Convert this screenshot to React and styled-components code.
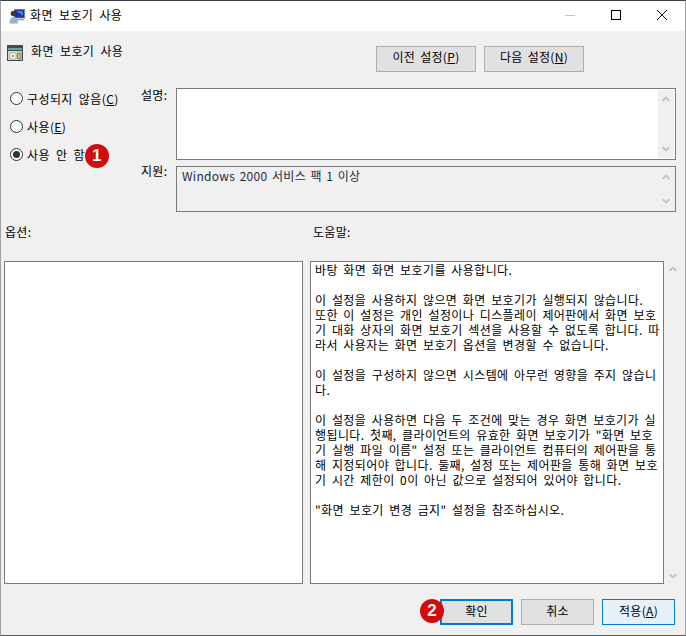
import React from "react";
import styled, { createGlobalStyle } from "styled-components";

const GlobalStyle = createGlobalStyle`
  html, body {
    margin: 0;
    padding: 0;
    background: #f0f0f0;
  }
  body {
    font-family: "Noto Sans CJK KR", "Noto Sans", sans-serif;
    font-size: 12px;
    color: #000;
  }
`;

const Window = styled.div`
  box-sizing: border-box;
  width: 686px;
  height: 636px;
  display: flex;
  flex-direction: column;
  background: #f0f0f0;
  border-top: 1px solid #3a3f45;
  border-bottom: 1px solid #55585c;
  border-left: 1px solid #a0a0a0;
  border-right: 1px solid #a0a0a0;
`;

const TitleBar = styled.div`
  height: 30px;
  flex: none;
  background: #fff;
  display: flex;
  align-items: center;
  padding-left: 8px;
`;

const WindowTitle = styled.span`
  flex: 1;
  margin-left: 5px;
  padding-bottom: 2px;
  line-height: 16px;
  letter-spacing: 0.4px;
  word-spacing: 3px;
`;

const CaptionButton = styled.div`
  width: 46px;
  height: 30px;
  padding-bottom: 2px;
  box-sizing: border-box;
  display: flex;
  align-items: center;
  justify-content: center;
`;

const Header = styled.div`
  display: flex;
  justify-content: space-between;
  height: 26px;
  margin-top: 15px;
  padding: 0 101px 0 6px;
`;

const Heading = styled.div`
  display: flex;
  align-items: flex-start;
  gap: 8px;
  margin-top: -1px;
`;

const HeadingText = styled.span`
  margin-top: -2px;
  line-height: 16px;
  letter-spacing: 0.4px;
  word-spacing: 3px;
`;

const NavButtons = styled.div`
  display: flex;
  gap: 8px;
`;

const Button = styled.button`
  box-sizing: border-box;
  width: ${({ $wide }) => ($wide ? "100px" : "73px")};
  height: 26px;
  padding: 0 0 ${({ $wide }) => ($wide ? "5px" : "3px")};
  font: inherit;
  letter-spacing: 0.3px;
  word-spacing: 2px;
  color: #000;
  background: ${({ $apply }) => ($apply ? "#e5f1fb" : "#e1e1e1")};
  border: ${({ $default }) => ($default ? "2px" : "1px")} solid
    ${({ $default, $apply }) => ($default || $apply ? "#0078d7" : "#adadad")};
`;

const SettingsRow = styled.div`
  display: flex;
  margin-top: 16px;
  padding-left: 9px;
`;

const RadioColumn = styled.div`
  width: 131px;
  padding-top: 1px;
  display: flex;
  flex-direction: column;
  gap: 10px;
`;

const RadioRow = styled.div`
  position: relative;
  height: 18px;
  display: flex;
  align-items: center;
  gap: 4px;
  letter-spacing: 0.4px;
  word-spacing: 3px;
`;

const RadioDot = styled.span`
  box-sizing: border-box;
  width: 13px;
  height: 13px;
  flex: none;
  border-radius: 50%;
  border: 1px solid #333;
  background: #fff;
  display: flex;
  align-items: center;
  justify-content: center;

  &::after {
    content: "";
    display: ${({ $checked }) => ($checked ? "block" : "none")};
    width: 7px;
    height: 7px;
    border-radius: 50%;
    background: #333;
  }
`;

const Badge = styled.span`
  position: absolute;
  left: ${({ $left }) => $left}px;
  top: ${({ $top }) => $top}px;
  width: 24px;
  height: 24px;
  border-radius: 50%;
  background: #d40b0b;
  color: #fff;
  font-family: "Liberation Sans", sans-serif;
  font-weight: 700;
  font-size: 17px;
  line-height: 24px;
  text-align: center;
`;

const Fields = styled.div`
  display: grid;
  grid-template-columns: 35px 500px;
  grid-template-rows: 72px 46px;
  row-gap: 6px;
`;

const FieldLabel = styled.div`
  line-height: 16px;
  margin-top: ${({ $top }) => $top}px;
  letter-spacing: 0.3px;
`;

const FieldBox = styled.div`
  box-sizing: border-box;
  border: 1px solid #7a7a7a;
  background: ${({ $muted }) => ($muted ? "#f0f0f0" : "#fff")};
  display: flex;
  justify-content: space-between;
  padding: 1px;
`;

const SupportText = styled.div`
  padding: 0 4px;
  line-height: 16px;
  color: #1f2a44;
  letter-spacing: 0.3px;
  word-spacing: 1.5px;
`;

const ScrollTrack = styled.div`
  width: ${({ $width }) => $width}px;
  flex: none;
  background: #f0f0f0;
  display: flex;
  flex-direction: column;
  justify-content: space-between;
  align-items: center;
  padding: ${({ $pad }) => $pad}px 0;
`;

const PaneLabels = styled.div`
  display: flex;
  margin-top: 11px;
  height: 17px;
  line-height: 17px;
  padding-left: 4px;
  letter-spacing: 0.3px;
`;

const PaneLabel = styled.div`
  width: ${({ $width }) => $width}px;
`;

const Panes = styled.div`
  display: flex;
  height: 323px;
  margin-top: 21px;
  padding-left: 3px;
`;

const OptionsPane = styled.div`
  box-sizing: border-box;
  width: 299px;
  border: 1px solid #7a7a7a;
  background: #fff;
`;

const HelpPane = styled.div`
  box-sizing: border-box;
  width: 354px;
  margin-left: 7px;
  border: 1px solid #7a7a7a;
  background: #fff;
  padding: 0 4px;
`;

const HelpText = styled.div`
  font-size: 12px;
  line-height: 15px;
  white-space: pre;
  letter-spacing: 0.4px;
  word-spacing: 2.4px;
`;

const Footer = styled.div`
  position: relative;
  display: flex;
  justify-content: flex-end;
  gap: 8px;
  margin-top: 15px;
  padding-right: 10px;
`;

const Chevron = ({ down }) => (
  <svg width="8" height="6" viewBox="0 0 8 6">
    <path
      d={down ? "M0.5 1.2L4 4.5l3.5-3.3" : "M0.5 4.8L4 1.5l3.5 3.3"}
      fill="none"
      stroke="#c4c4c4"
      strokeWidth="2"
    />
  </svg>
);

const AppIcon = () => (
  <svg width="16" height="16" viewBox="0 0 16 16">
    <rect x="5.5" y="1.5" width="10" height="8.5" fill="#1a2fa8" stroke="#76828e" />
    <path d="M7 3h7v5z" fill="#2f86ea" />
    <path d="M7 11h8v1.5H7z" fill="#a3acb5" />
    <circle cx="4.5" cy="5.5" r="2.8" fill="#4a3524" />
    <path d="M0.5 15.5c0-4.5 1.8-6.5 4.2-6.5s4.3 2 4.3 6.5z" fill="#93b4d9" />
  </svg>
);

const PolicyIcon = () => (
  <svg width="16" height="16" viewBox="0 0 16 16">
    <rect x="0" y="0" width="16" height="16" fill="#3f4a52" />
    <rect x="1" y="3" width="14" height="2" fill="#6fa39b" />
    <rect x="1" y="6" width="14" height="9" fill="#d9d7b8" />
    <circle cx="6" cy="11" r="3.5" fill="#f6f6ee" stroke="#8a8a78" strokeWidth="0.6" />
    <circle cx="6" cy="11" r="1" fill="#6f7a80" />
    <path d="M10.5 8h3.5v6h-3.5z" fill="#bdb98a" stroke="#5c5c48" strokeWidth="0.6" />
  </svg>
);

const helpLines = `바탕 화면 화면 보호기를 사용합니다.

이 설정을 사용하지 않으면 화면 보호기가 실행되지 않습니다.
또한 이 설정은 개인 설정이나 디스플레이 제어판에서 화면 보호
기 대화 상자의 화면 보호기 섹션을 사용할 수 없도록 합니다. 따
라서 사용자는 화면 보호기 옵션을 변경할 수 없습니다.

이 설정을 구성하지 않으면 시스템에 아무런 영향을 주지 않습니
다.

이 설정을 사용하면 다음 두 조건에 맞는 경우 화면 보호기가 실
행됩니다. 첫째, 클라이언트의 유효한 화면 보호기가 "화면 보호
기 실행 파일 이름" 설정 또는 클라이언트 컴퓨터의 제어판을 통
해 지정되어야 합니다. 둘째, 설정 또는 제어판을 통해 화면 보호
기 시간 제한이 0이 아닌 값으로 설정되어 있어야 합니다.

"화면 보호기 변경 금지" 설정을 참조하십시오.`;

export default function App() {
  return (
    <Window>
      <GlobalStyle />
      <TitleBar>
        <AppIcon />
        <WindowTitle>화면 보호기 사용</WindowTitle>
        <CaptionButton>
          <svg width="10" height="10" viewBox="0 0 10 10">
            <path d="M0 5.5h10" stroke="#c4c4c4" />
          </svg>
        </CaptionButton>
        <CaptionButton>
          <svg width="10" height="10" viewBox="0 0 10 10">
            <rect x="0.5" y="0.5" width="9" height="9" fill="none" stroke="#000" />
          </svg>
        </CaptionButton>
        <CaptionButton>
          <svg width="10" height="10" viewBox="0 0 10 10">
            <path d="M0 0l10 10M10 0L0 10" stroke="#000" />
          </svg>
        </CaptionButton>
      </TitleBar>

      <Header>
        <Heading>
          <PolicyIcon />
          <HeadingText>화면 보호기 사용</HeadingText>
        </Heading>
        <NavButtons>
          <Button $wide>
            이전 설정(<u>P</u>)
          </Button>
          <Button $wide>
            다음 설정(<u>N</u>)
          </Button>
        </NavButtons>
      </Header>

      <SettingsRow>
        <RadioColumn>
          <RadioRow>
            <RadioDot />
            <span>
              구성되지 않음(<u>C</u>)
            </span>
          </RadioRow>
          <RadioRow>
            <RadioDot />
            <span>
              사용(<u>E</u>)
            </span>
          </RadioRow>
          <RadioRow>
            <RadioDot $checked />
            <span>사용 안 함</span>
            <Badge $left={75} $top={-1}>1</Badge>
          </RadioRow>
        </RadioColumn>
        <Fields>
          <FieldLabel $top={-1}>설명:</FieldLabel>
          <FieldBox>
            <span />
            <ScrollTrack $width={16} $pad={6}>
              <Chevron />
              <Chevron down />
            </ScrollTrack>
          </FieldBox>
          <FieldLabel $top={-3}>지원:</FieldLabel>
          <FieldBox $muted>
            <SupportText>Windows 2000 서비스 팩 1 이상</SupportText>
            <ScrollTrack $width={16} $pad={6}>
              <Chevron />
              <Chevron down />
            </ScrollTrack>
          </FieldBox>
        </Fields>
      </SettingsRow>

      <PaneLabels>
        <PaneLabel $width={308}>옵션:</PaneLabel>
        <PaneLabel $width={200}>도움말:</PaneLabel>
      </PaneLabels>

      <Panes>
        <OptionsPane />
        <HelpPane>
          <HelpText>{helpLines}</HelpText>
        </HelpPane>
        <ScrollTrack $width={18} $pad={5}>
          <Chevron />
          <Chevron down />
        </ScrollTrack>
      </Panes>

      <Footer>
        <Badge $left={419} $top={0}>2</Badge>
        <Button $default>확인</Button>
        <Button>취소</Button>
        <Button $apply>
          적용(<u>A</u>)
        </Button>
      </Footer>
    </Window>
  );
}
